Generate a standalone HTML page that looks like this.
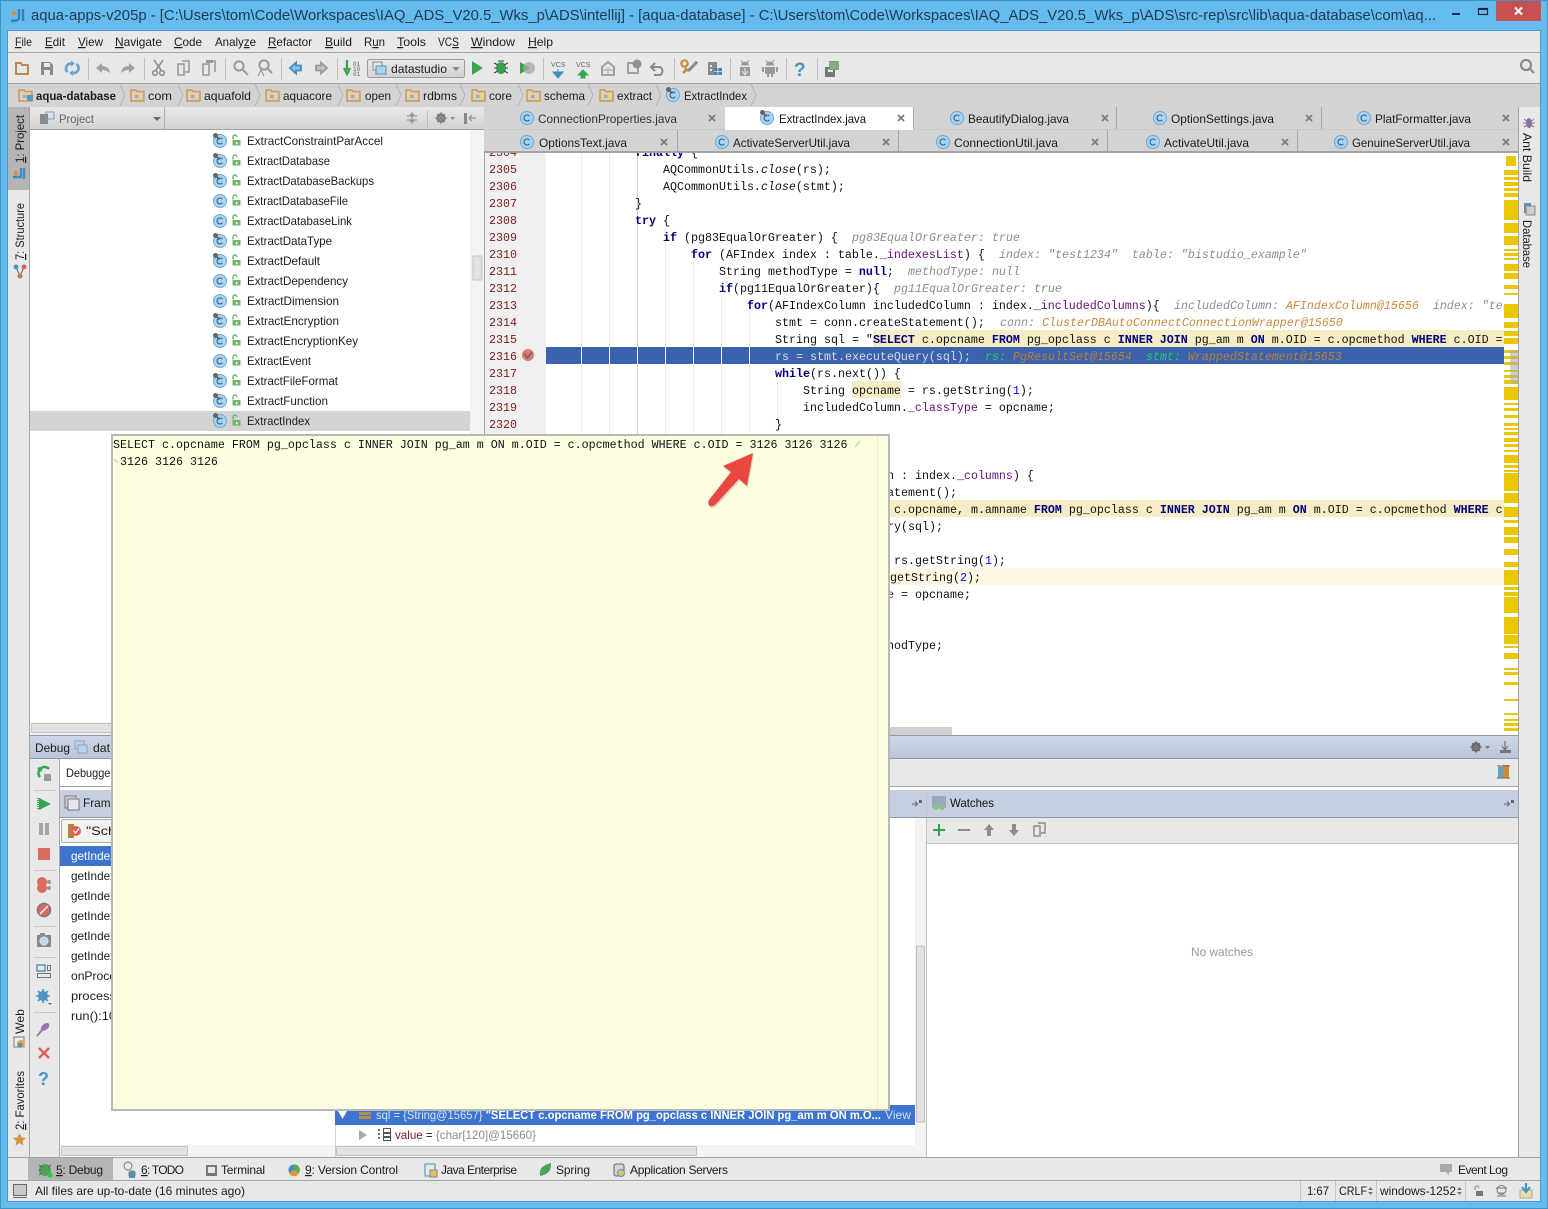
<!DOCTYPE html>
<html><head><meta charset="utf-8"><title>IntelliJ</title>
<style>
html,body{margin:0;padding:0;background:#64bbef;overflow:hidden}
svg{display:block}
text{white-space:pre}
.u{font-family:"Liberation Sans",sans-serif;font-size:12px;fill:#1c1c1c}
.g{fill:#666}
.m{font-family:"Liberation Mono",monospace;font-size:11.667px;fill:#111}
.k{font-weight:bold;fill:#000080}
.f{fill:#660e7a}
.n{fill:#0000ff}
.c{font-style:italic;fill:#8c8c8c}
.o{font-style:italic;fill:#c98a3c}
.l{fill:#7d1a1a}
.w{fill:#d5dde8}
.gr{font-style:italic;fill:#19d45f}
.ob{font-style:italic;fill:#b9803c}
.ul{text-decoration:underline}
</style></head><body>
<svg xmlns="http://www.w3.org/2000/svg" width="1548" height="1209" viewBox="0 0 1548 1209">
<defs>
<linearGradient id="hd" x1="0" y1="0" x2="0" y2="1"><stop offset="0" stop-color="#e9e9e9"/><stop offset="1" stop-color="#d2d2d2"/></linearGradient>
<linearGradient id="bl" x1="0" y1="0" x2="0" y2="1"><stop offset="0" stop-color="#ccd6e6"/><stop offset="1" stop-color="#bcc6d8"/></linearGradient>
<clipPath id="ed"><rect x="484" y="153" width="1020" height="582"/></clipPath>
<clipPath id="ed2"><rect x="546" y="153" width="958" height="582"/></clipPath>
<g id="cc"><circle r="6.5" fill="#a8d4f4" stroke="#6da8d6"/><path d="M2.400-1.800A3 3 0 1 0 2.400 1.800" fill="none" stroke="#3f5f7e" stroke-width="1.100"/></g>
<g id="pin"><circle cx="-4.500" cy="-5.500" r="2.500" fill="#666"/><path d="M-3-4L-.5-1.500" stroke="#555" stroke-width="1.300"/></g>
<g id="lock"><rect x="-3.500" y="-1" width="8" height="5.500" fill="#6fb56f"/><path d="M-3-1.500V-4A2 2 0 0 1 1-4" fill="none" stroke="#6fb56f" stroke-width="1.400"/><rect x="0" y="1" width="1.500" height="2.200" fill="#fff"/></g>
<g id="fo"><path d="M0 0H5L6 1.500H13V11H0Z" fill="#e7cda8" stroke="#c79a5c" stroke-width="1.400"/><rect x="4" y="5" width="3.500" height="3" fill="#7fb4dc"/></g>
<path id="chev" d="M0-11L5 0L0 11" fill="none" stroke="#b5b5b5"/>
<path id="xx" d="M-3-3L3 3M3-3L-3 3" stroke="#7b7b7b" stroke-width="1.800" fill="none"/>
<g id="pinr"><path d="M-5 1H0M-2-1.500L.5 1L-2 3.500" fill="none" stroke="#666"/><rect x="2" y="-3" width="3" height="3" fill="#666"/></g>
</defs>

<!-- window -->
<rect width="1548" height="1209" fill="#64bbef"/>
<rect x=".5" y=".5" width="1547" height="1208" fill="none" stroke="#3f93c8"/>
<rect x="8" y="30" width="1532" height="1171" fill="#e8e8e8"/>
<rect x="7.500" y="30.500" width="1533" height="1171" fill="none" stroke="#4c97c6"/>

<!-- title -->
<g transform="translate(11,9)"><circle cx="3" cy="4" r="2.200" fill="#e08a2e"/><path d="M8 0V9Q8 12 0 12" fill="none" stroke="#3c7fb1" stroke-width="2.400"/><path d="M12 0V12" stroke="#3c7fb1" stroke-width="2.400"/></g>
<text x="31" y="20" font-family="Liberation Sans,sans-serif" font-size="14.500" fill="#1f3a50" textLength="1405" lengthAdjust="spacingAndGlyphs">aqua-apps-v205p - [C:\Users\tom\Code\Workspaces\IAQ_ADS_V20.5_Wks_p\ADS\intellij] - [aqua-database] - C:\Users\tom\Code\Workspaces\IAQ_ADS_V20.5_Wks_p\ADS\src-rep\src\lib\aqua-database\com\aq...</text>
<rect x="1452" y="13" width="8" height="2" fill="#1a2a3a"/>
<rect x="1478.500" y="8.500" width="9" height="6" fill="none" stroke="#1a2a3a" stroke-width="1.200"/><rect x="1478" y="8" width="10" height="2" fill="#1a2a3a"/>
<rect x="1496" y="1" width="45" height="20" fill="#c75050"/>
<path d="M1515 7.500L1522 14.500M1522 7.500L1515 14.500" stroke="#fff" stroke-width="2"/>

<!-- menu -->
<rect x="8" y="52" width="1532" height="1" fill="#a3a3a3"/>
<g class="u">
<text x="15" y="46" textLength="17" lengthAdjust="spacingAndGlyphs"><tspan class="ul">F</tspan>ile</text>
<text x="45" y="46" textLength="20" lengthAdjust="spacingAndGlyphs"><tspan class="ul">E</tspan>dit</text>
<text x="78" y="46" textLength="25" lengthAdjust="spacingAndGlyphs"><tspan class="ul">V</tspan>iew</text>
<text x="115" y="46" textLength="47" lengthAdjust="spacingAndGlyphs"><tspan class="ul">N</tspan>avigate</text>
<text x="174" y="46" textLength="28" lengthAdjust="spacingAndGlyphs"><tspan class="ul">C</tspan>ode</text>
<text x="215" y="46" textLength="41" lengthAdjust="spacingAndGlyphs">Analy<tspan class="ul">z</tspan>e</text>
<text x="268" y="46" textLength="44" lengthAdjust="spacingAndGlyphs"><tspan class="ul">R</tspan>efactor</text>
<text x="325" y="46" textLength="27" lengthAdjust="spacingAndGlyphs"><tspan class="ul">B</tspan>uild</text>
<text x="364" y="46" textLength="21" lengthAdjust="spacingAndGlyphs">R<tspan class="ul">u</tspan>n</text>
<text x="397" y="46" textLength="29" lengthAdjust="spacingAndGlyphs"><tspan class="ul">T</tspan>ools</text>
<text x="438" y="46" textLength="21" lengthAdjust="spacingAndGlyphs">VC<tspan class="ul">S</tspan></text>
<text x="471" y="46" textLength="44" lengthAdjust="spacingAndGlyphs"><tspan class="ul">W</tspan>indow</text>
<text x="528" y="46" textLength="25" lengthAdjust="spacingAndGlyphs"><tspan class="ul">H</tspan>elp</text>
</g>

<!-- toolbar -->
<rect x="8" y="83" width="1532" height="1" fill="#a3a3a3"/>
<g fill="#c0c0c0">
<rect x="88" y="58" width="1" height="22"/><rect x="144" y="58" width="1" height="22"/><rect x="225" y="58" width="1" height="22"/><rect x="281" y="58" width="1" height="22"/><rect x="337" y="58" width="1" height="22"/><rect x="543" y="58" width="1" height="22"/><rect x="674" y="58" width="1" height="22"/><rect x="730" y="58" width="1" height="22"/><rect x="786" y="58" width="1" height="22"/><rect x="817" y="58" width="1" height="22"/>
</g>
<path d="M16 63H21L22 65H28V74H16Z" fill="none" stroke="#b98a4c" stroke-width="2"/>
<path d="M41 62H50L53 65V75H41Z" fill="#8a8a8a"/><rect x="44" y="63" width="6" height="4" fill="#e8e8e8"/><rect x="44" y="70" width="6" height="5" fill="#e8e8e8"/>
<path d="M67.500 72A5 5 0 0 1 71 63.500M76.500 64A5 5 0 0 1 73 73" fill="none" stroke="#6aa6cd" stroke-width="2.800"/><path d="M71 60.500V66.500L75 63.500ZM73 70V76L69 73Z" fill="#6aa6cd"/>
<path d="M96 68L102 63V66Q109 66 110 73Q106 70 102 70V73Z" fill="#a0a0a0"/>
<path d="M135 68L129 63V66Q122 66 121 73Q125 70 129 70V73Z" fill="#a0a0a0"/>
<g fill="none" stroke="#8e8e8e" stroke-width="1.600"><path d="M154 60L161 70M163 60L156 70"/><circle cx="155" cy="73" r="2.300"/><circle cx="162" cy="73" r="2.300"/></g>
<g fill="none" stroke="#9a9a9a" stroke-width="1.600"><path d="M178 64H184V75H178ZM182 61H189V72H185"/></g>
<g fill="none" stroke="#9a9a9a" stroke-width="1.600"><path d="M203 64H209V75H203ZM209 61H215V72"/></g><rect x="206" y="60" width="7" height="3" fill="#9a9a9a"/>
<g fill="none" stroke="#9a9a9a" stroke-width="2"><circle cx="239" cy="66" r="4.600"/><path d="M243 70L248 75"/></g>
<g fill="none" stroke="#9a9a9a" stroke-width="2"><circle cx="264" cy="65" r="4.600"/><path d="M268 69L272 73"/></g><path d="M258 76L261 70L264 76" fill="none" stroke="#8e8e8e"/>
<path d="M290 68L296 62.500V65.500H301V70.500H296V73.500Z" fill="#8fc4e4" stroke="#3f8ec2" stroke-width="1.800"/>
<path d="M327 68L321 62.500V65.500H316V70.500H321V73.500Z" fill="#c4c4c4" stroke="#999" stroke-width="1.800"/>
<path d="M347 60V70M344 68L347 74L350 68" stroke="#34a34a" stroke-width="2.200" fill="none"/>
<text x="353" y="66" font-family="Liberation Mono,monospace" font-size="6" fill="#666">01</text><text x="353" y="71" font-family="Liberation Mono,monospace" font-size="6" fill="#666">10</text><text x="353" y="76" font-family="Liberation Mono,monospace" font-size="6" fill="#666">01</text>
<rect x="367.500" y="59.500" width="97" height="18" rx="2" fill="url(#hd)" stroke="#9a9a9a"/>
<rect x="373" y="62" width="9" height="8" fill="#e6e6e6" stroke="#888"/><rect x="376" y="66" width="10" height="8" fill="#a9d4f0" stroke="#5d92b6"/>
<text class="u" x="391" y="73" textLength="56" lengthAdjust="spacingAndGlyphs">datastudio</text>
<path d="M452 67H460L456 71Z" fill="#888"/>
<path d="M472 61L483 68L472 75Z" fill="#35a64e"/>
<ellipse cx="501" cy="68" rx="5" ry="6" fill="#34a34a"/><path d="M494 63L498 65M494 68H497M494 73L498 71M508 63L504 65M508 68H505M508 73L504 71M498 61L504 61" stroke="#444" fill="none"/>
<path d="M520 62L530 68L520 74Z" fill="#35a64e"/><circle cx="529" cy="68" r="6" fill="#a5a5a5" opacity=".75"/>
<text x="551" y="67" font-family="Liberation Sans" font-size="7" fill="#666">VCS</text><path d="M558 69V75M553 72L558 78L563 72Z" fill="#3f8ec2" stroke="#3f8ec2" stroke-width="1"/>
<text x="576" y="67" font-family="Liberation Sans" font-size="7" fill="#666">VCS</text><path d="M583 70L578 75H581V78H585V75H588Z" fill="#35a64e" stroke="#35a64e"/>
<path d="M602 67L608 62L614 67V75H602Z" fill="none" stroke="#a0a0a0" stroke-width="2"/><path d="M608 67V75M602 70H614" stroke="#a0a0a0"/>
<rect x="627" y="62" width="12" height="12" fill="#a0a0a0"/><rect x="629" y="64" width="8" height="8" fill="#e8e8e8"/><circle cx="637" cy="64" r="4.500" fill="#939393"/>
<path d="M655 63L651 67L655 71M652 67H660A4.500 4.500 0 0 1 660 75H654" fill="none" stroke="#8a8a8a" stroke-width="2"/>
<circle cx="684.500" cy="63.500" r="3.200" fill="none" stroke="#c98a3c" stroke-width="2.200"/><path d="M683 73L686 70M685 68L688 71" stroke="#c98a3c" stroke-width="2.400"/><path d="M688 71L695 64L697 61.500" stroke="#8a8a8a" stroke-width="3" fill="none"/>
<path d="M708 62H717V75H708Z" fill="#8a8a8a"/><rect x="710" y="65" width="2" height="2" fill="#e8e8e8"/><rect x="710" y="69" width="2" height="2" fill="#e8e8e8"/><path d="M714 68H722V75H714Z" fill="#3d86b8"/><path d="M718 68V75M714 71.500H722" stroke="#e8e8e8" stroke-width=".8"/>
<path d="M740 67H750V76H740ZM741 65.500A4 4 0 0 1 749 65.500Z" fill="#9a9a9a"/><path d="M745 68V74M742 71L745 75L748 71" stroke="#e8e8e8" fill="none"/><path d="M741 60L742.500 62.500M749 60L747.500 62.500" stroke="#9a9a9a"/>
<path d="M765 67H775V74H765ZM766 65.500A4 4 0 0 1 774 65.500ZM762 67H764V72H762ZM776 67H778V72H776ZM767 74H769V77H767ZM771 74H773V77H771Z" fill="#9a9a9a"/><path d="M766 60L767.500 62.500M774 60L772.500 62.500" stroke="#9a9a9a"/>
<text x="794" y="76" font-family="Liberation Sans" font-weight="bold" font-size="19" fill="#4b94c4">?</text>
<path d="M825 67H835V77H825Z" fill="#777"/><rect x="828" y="69" width="5" height="3" fill="#e8e8e8"/><rect x="829.500" y="61.500" width="9" height="8" fill="#7fb27f" stroke="#5c965c" stroke-dasharray="2 1"/>
<g fill="none" stroke="#8a8a8a" stroke-width="2.200"><circle cx="1526" cy="65" r="5"/><path d="M1530 69L1534 73"/></g>

<!-- breadcrumb -->
<rect x="8" y="84" width="1532" height="23" fill="#d3d3d3"/>
<g class="u">
<text x="36" y="100" font-weight="bold" textLength="80" lengthAdjust="spacingAndGlyphs">aqua-database</text>
<text x="148" y="100" textLength="24" lengthAdjust="spacingAndGlyphs">com</text>
<text x="204" y="100" textLength="47" lengthAdjust="spacingAndGlyphs">aquafold</text>
<text x="283" y="100" textLength="49" lengthAdjust="spacingAndGlyphs">aquacore</text>
<text x="365" y="100" textLength="26" lengthAdjust="spacingAndGlyphs">open</text>
<text x="423" y="100" textLength="34" lengthAdjust="spacingAndGlyphs">rdbms</text>
<text x="489" y="100" textLength="23" lengthAdjust="spacingAndGlyphs">core</text>
<text x="544" y="100" textLength="41" lengthAdjust="spacingAndGlyphs">schema</text>
<text x="617" y="100" textLength="35" lengthAdjust="spacingAndGlyphs">extract</text>
<text x="684" y="100" textLength="63" lengthAdjust="spacingAndGlyphs">ExtractIndex</text>
</g>
<use href="#fo" x="19" y="90"/><rect x="27" y="95" width="6" height="6" fill="#4f9ac9"/>
<use href="#fo" x="131" y="90"/><use href="#fo" x="187" y="90"/><use href="#fo" x="266" y="90"/><use href="#fo" x="347" y="90"/><use href="#fo" x="406" y="90"/><use href="#fo" x="472" y="90"/><use href="#fo" x="527" y="90"/><use href="#fo" x="600" y="90"/>
<use href="#cc" x="673" y="95"/><use href="#pin" x="673" y="95"/>
<use href="#chev" x="120" y="95"/><use href="#chev" x="178" y="95"/><use href="#chev" x="255" y="95"/><use href="#chev" x="338" y="95"/><use href="#chev" x="396" y="95"/><use href="#chev" x="460" y="95"/><use href="#chev" x="518" y="95"/><use href="#chev" x="588" y="95"/><use href="#chev" x="656" y="95"/><use href="#chev" x="751" y="95"/>

<!-- left strip -->
<rect x="8" y="107" width="21" height="1051" fill="#e8e8e8"/>
<rect x="8" y="107" width="21" height="83" fill="#b5b5b5"/>
<rect x="29" y="107" width="1" height="1051" fill="#a3a3a3"/>
<g class="u">
<text transform="translate(24,163) rotate(-90)" textLength="48" lengthAdjust="spacingAndGlyphs"><tspan class="ul">1</tspan>: Project</text>
<text transform="translate(24,260) rotate(-90)" textLength="57" lengthAdjust="spacingAndGlyphs"><tspan class="ul">7</tspan>: Structure</text>
<text transform="translate(24,1034) rotate(-90)" textLength="25" lengthAdjust="spacingAndGlyphs">Web</text>
<text transform="translate(24,1130) rotate(-90)" textLength="59" lengthAdjust="spacingAndGlyphs"><tspan class="ul">2</tspan>: Favorites</text>
</g>
<g transform="translate(13,168)"><circle cx="3" cy="5" r="2" fill="#e08a2e"/><path d="M0 9H8V0" fill="none" stroke="#3c8ec4" stroke-width="2.400"/><path d="M11 0V11" stroke="#3c8ec4" stroke-width="2.400"/></g>
<path d="M16 267L20 276L24 267" fill="none" stroke="#666"/><circle cx="16" cy="267" r="2.500" fill="#4b94cf"/><circle cx="24" cy="267" r="2.500" fill="#d9605a"/><circle cx="20" cy="276" r="2.500" fill="#b9803c"/>
<rect x="14" y="1037" width="10" height="10" fill="#eee" stroke="#777"/><circle cx="21" cy="1044" r="4" fill="#e8a93c"/><circle cx="20" cy="1045" r="2.500" fill="#4b94cf"/>
<path d="M19.500 1133L21.500 1137.500L26 1138L22.500 1141L23.500 1145.500L19.500 1143L15.500 1145.500L16.500 1141L13 1138L17.500 1137.500Z" fill="#d9923e"/>

<!-- right strip -->
<rect x="1518" y="107" width="22" height="1051" fill="#e8e8e8"/>
<rect x="1518" y="107" width="1" height="1051" fill="#a3a3a3"/>
<g class="u">
<text transform="translate(1523,133) rotate(90)" textLength="49" lengthAdjust="spacingAndGlyphs">Ant Build</text>
<text transform="translate(1523,220) rotate(90)" textLength="48" lengthAdjust="spacingAndGlyphs">Database</text>
</g>
<ellipse cx="1529" cy="123" rx="3" ry="5" fill="#8e6fa8"/><path d="M1524 119L1534 127M1534 119L1524 127M1523 123H1535" stroke="#8e6fa8"/>
<rect x="1524" y="203" width="7" height="10" fill="#5d94bb"/><rect x="1526" y="206" width="9" height="9" fill="#ccc" stroke="#888"/>

<!-- project panel -->
<rect x="30" y="107" width="454" height="22" fill="url(#hd)"/>
<rect x="30" y="107" width="134" height="22" fill="url(#hd)"/>
<rect x="164" y="107" width="1" height="22" fill="#b0b0b0"/>
<rect x="30" y="129" width="454" height="1" fill="#a3a3a3"/>
<rect x="40" y="114" width="8" height="10" fill="#8a8a8a"/><rect x="46" y="112" width="8" height="7" fill="none" stroke="#6ea3c7"/>
<text class="u g" x="59" y="123" textLength="35" lengthAdjust="spacingAndGlyphs">Project</text>
<path d="M153 117H161L157 121Z" fill="#666"/>
<path d="M412 112V124M407 116H417M407 120H417M410 114L412 116L414 114M410 122L412 120L414 122" stroke="#888" fill="none"/>
<rect x="427" y="110" width="1" height="18" fill="#c0c0c0"/>
<circle cx="441" cy="118" r="3.500" fill="none" stroke="#7d7d7d" stroke-width="2.400"/><path d="M441 112V124M435 118H447M437 114L445 122M445 114L437 122" stroke="#7d7d7d"/>
<path d="M450 117H455L452.500 120Z" fill="#888"/>
<rect x="464" y="113" width="3" height="11" fill="#888"/><path d="M469 118H476M472 115L469 118L472 121" stroke="#888" fill="none"/>

<rect x="30" y="130" width="454" height="605" fill="#fff"/>
<rect x="470" y="130" width="14" height="592" fill="#f3f3f3"/>
<rect x="473" y="256" width="9" height="24" rx="1" fill="#e2e2e2" stroke="#c0c0c0"/>
<rect x="30" y="411" width="440" height="20" fill="#d4d4d4"/>
<rect x="30" y="722" width="454" height="13" fill="#f3f3f3"/>
<rect x="31.500" y="723.500" width="100" height="9" rx="1" fill="#e2e2e2" stroke="#c0c0c0"/>

<g class="u">
<text x="247" y="145" textLength="136" lengthAdjust="spacingAndGlyphs">ExtractConstraintParAccel</text>
<text x="247" y="165" textLength="83" lengthAdjust="spacingAndGlyphs">ExtractDatabase</text>
<text x="247" y="185" textLength="127" lengthAdjust="spacingAndGlyphs">ExtractDatabaseBackups</text>
<text x="247" y="205" textLength="101" lengthAdjust="spacingAndGlyphs">ExtractDatabaseFile</text>
<text x="247" y="225" textLength="105" lengthAdjust="spacingAndGlyphs">ExtractDatabaseLink</text>
<text x="247" y="245" textLength="85" lengthAdjust="spacingAndGlyphs">ExtractDataType</text>
<text x="247" y="265" textLength="73" lengthAdjust="spacingAndGlyphs">ExtractDefault</text>
<text x="247" y="285" textLength="101" lengthAdjust="spacingAndGlyphs">ExtractDependency</text>
<text x="247" y="305" textLength="92" lengthAdjust="spacingAndGlyphs">ExtractDimension</text>
<text x="247" y="325" textLength="92" lengthAdjust="spacingAndGlyphs">ExtractEncryption</text>
<text x="247" y="345" textLength="111" lengthAdjust="spacingAndGlyphs">ExtractEncryptionKey</text>
<text x="247" y="365" textLength="64" lengthAdjust="spacingAndGlyphs">ExtractEvent</text>
<text x="247" y="385" textLength="91" lengthAdjust="spacingAndGlyphs">ExtractFileFormat</text>
<text x="247" y="405" textLength="81" lengthAdjust="spacingAndGlyphs">ExtractFunction</text>
<text x="247" y="425" textLength="63" lengthAdjust="spacingAndGlyphs">ExtractIndex</text>
</g>
<g>
<use href="#cc" x="220" y="141"/><use href="#pin" x="220" y="141"/><use href="#lock" x="236" y="141"/>
<use href="#cc" x="220" y="161"/><use href="#pin" x="220" y="161"/><use href="#lock" x="236" y="161"/>
<use href="#cc" x="220" y="181"/><use href="#pin" x="220" y="181"/><use href="#lock" x="236" y="181"/>
<use href="#cc" x="220" y="201"/><use href="#lock" x="236" y="201"/>
<use href="#cc" x="220" y="221"/><use href="#lock" x="236" y="221"/>
<use href="#cc" x="220" y="241"/><use href="#pin" x="220" y="241"/><use href="#lock" x="236" y="241"/>
<use href="#cc" x="220" y="261"/><use href="#pin" x="220" y="261"/><use href="#lock" x="236" y="261"/>
<use href="#cc" x="220" y="281"/><use href="#lock" x="236" y="281"/>
<use href="#cc" x="220" y="301"/><use href="#lock" x="236" y="301"/>
<use href="#cc" x="220" y="321"/><use href="#pin" x="220" y="321"/><use href="#lock" x="236" y="321"/>
<use href="#cc" x="220" y="341"/><use href="#pin" x="220" y="341"/><use href="#lock" x="236" y="341"/>
<use href="#cc" x="220" y="361"/><use href="#lock" x="236" y="361"/>
<use href="#cc" x="220" y="381"/><use href="#pin" x="220" y="381"/><use href="#lock" x="236" y="381"/>
<use href="#cc" x="220" y="401"/><use href="#pin" x="220" y="401"/><use href="#lock" x="236" y="401"/>
<use href="#cc" x="220" y="421"/><use href="#pin" x="220" y="421"/><use href="#lock" x="236" y="421"/>
</g>

<!-- editor -->
<rect x="484" y="153" width="1034" height="582" fill="#fff"/>
<rect x="484" y="130" width="62" height="605" fill="#f0f0f0"/>
<rect x="484" y="130" width="1" height="605" fill="#a3a3a3"/>
<rect x="890" y="500" width="614" height="17" fill="#f6edc4"/>
<rect x="890" y="568" width="614" height="17" fill="#fdf8e4"/>
<rect x="873" y="330" width="631" height="17" fill="#f6edc4"/>
<rect x="546" y="347" width="958" height="17" fill="#3a62ad"/>
<rect x="852" y="381" width="49" height="17" fill="#f6edc4"/>
<g fill="#ececec">
<rect x="581" y="153" width="1" height="281"/><rect x="609" y="153" width="1" height="281"/>
<rect x="637" y="153" width="1" height="281" fill="#d0d0d0"/>
<rect x="665" y="228" width="1" height="206"/><rect x="693" y="262" width="1" height="172"/><rect x="721" y="296" width="1" height="138"/><rect x="749" y="313" width="1" height="121"/><rect x="777" y="381" width="1" height="40"/>
</g>
<g fill="#fff"><rect x="581" y="347" width="1" height="17"/><rect x="609" y="347" width="1" height="17"/><rect x="637" y="347" width="1" height="17"/><rect x="665" y="347" width="1" height="17"/><rect x="693" y="347" width="1" height="17"/><rect x="721" y="347" width="1" height="17"/><rect x="749" y="347" width="1" height="17"/></g>
<g class="m" clip-path="url(#ed)">
<g class="l">
<text x="489" y="156" class="m l">2304</text><text x="489" y="173" class="m l">2305</text><text x="489" y="190" class="m l">2306</text><text x="489" y="207" class="m l">2307</text><text x="489" y="224" class="m l">2308</text><text x="489" y="241" class="m l">2309</text><text x="489" y="258" class="m l">2310</text><text x="489" y="275" class="m l">2311</text><text x="489" y="292" class="m l">2312</text><text x="489" y="309" class="m l">2313</text><text x="489" y="326" class="m l">2314</text><text x="489" y="343" class="m l">2315</text><text x="489" y="360" class="m l">2316</text><text x="489" y="377" class="m l">2317</text><text x="489" y="394" class="m l">2318</text><text x="489" y="411" class="m l">2319</text><text x="489" y="428" class="m l">2320</text>
</g>
</g>
<circle cx="528" cy="355" r="6" fill="#e5776b"/><path d="M524.500 354L527.500 358L532 352" fill="none" stroke="#666" stroke-width="1.600"/>
<g clip-path="url(#ed2)">
<text class="m" x="635" y="156"><tspan class="k">finally</tspan> {</text>
<text class="m" x="663" y="173">AQCommonUtils.<tspan font-style="italic">close</tspan>(rs);</text>
<text class="m" x="663" y="190">AQCommonUtils.<tspan font-style="italic">close</tspan>(stmt);</text>
<text class="m" x="635" y="207">}</text>
<text class="m" x="635" y="224"><tspan class="k">try</tspan> {</text>
<text class="m" x="663" y="241"><tspan class="k">if</tspan> (pg83EqualOrGreater) {</text><text class="m c" x="852" y="241">pg83EqualOrGreater: true</text>
<text class="m" x="691" y="258"><tspan class="k">for</tspan> (AFIndex index : table.<tspan class="f">_indexesList</tspan>) {</text><text class="m c" x="999" y="258">index: "test1234"  table: "bistudio_example"</text>
<text class="m" x="719" y="275">String methodType = <tspan class="k">null</tspan>;</text><text class="m c" x="908" y="275">methodType: null</text>
<text class="m" x="719" y="292"><tspan class="k">if</tspan>(pg11EqualOrGreater){</text><text class="m c" x="894" y="292">pg11EqualOrGreater: true</text>
<text class="m" x="747" y="309"><tspan class="k">for</tspan>(AFIndexColumn includedColumn : index.<tspan class="f">_includedColumns</tspan>){</text><text class="m c" x="1174" y="309">includedColumn: <tspan class="o">AFIndexColumn@15656</tspan>  index: "test</text>
<text class="m" x="775" y="326">stmt = conn.createStatement();</text><text class="m c" x="1000" y="326">conn: <tspan class="o">ClusterDBAutoConnectConnectionWrapper@15650</tspan></text>
<text class="m" x="775" y="343">String sql = "<tspan class="k">SELECT</tspan> c.opcname <tspan class="k">FROM</tspan> pg_opclass c <tspan class="k">INNER JOIN</tspan> pg_am m <tspan class="k">ON</tspan> m.OID = c.opcmethod <tspan class="k">WHERE</tspan> c.OID =</text>
<text class="m w" x="775" y="360">rs = stmt.executeQuery(sql);</text><text class="m gr" x="985" y="360">rs: <tspan class="ob">PgResultSet@15654</tspan>  stmt: <tspan class="ob">WrappedStatement@15653</tspan></text>
<text class="m" x="775" y="377"><tspan class="k">while</tspan>(rs.next()) {</text>
<text class="m" x="803" y="394">String opcname = rs.getString(<tspan class="n">1</tspan>);</text>
<text class="m" x="803" y="411">includedColumn.<tspan class="f">_classType</tspan> = opcname;</text>
<text class="m" x="775" y="428">}</text>
<text class="m" x="887" y="479">n : index.<tspan class="f">_columns</tspan>) {</text>
<text class="m" x="887" y="496">atement();</text>
<text class="m" x="894" y="513">c.opcname, m.amname <tspan class="k">FROM</tspan> pg_opclass c <tspan class="k">INNER JOIN</tspan> pg_am m <tspan class="k">ON</tspan> m.OID = c.opcmethod <tspan class="k">WHERE</tspan> c</text>
<text class="m" x="887" y="530">ry(sql);</text>
<text class="m" x="894" y="564">rs.getString(<tspan class="n">1</tspan>);</text>
<text class="m" x="883" y="581">.getString(<tspan class="n">2</tspan>);</text>
<text class="m f" x="887" y="598">e<tspan fill="#111"> = opcname;</tspan></text>
<text class="m" x="887" y="649">hodType;</text>
</g>
<!-- error stripes -->
<g fill="#ebc700">
<rect x="1506" y="156" width="10" height="10"/>
<rect x="1504" y="170" width="14" height="5"/><rect x="1504" y="177" width="14" height="3"/><rect x="1504" y="182" width="14" height="4"/><rect x="1504" y="188" width="14" height="3"/><rect x="1504" y="193" width="14" height="4"/>
<rect x="1504" y="200" width="14" height="20"/><rect x="1504" y="223" width="14" height="10"/><rect x="1504" y="236" width="14" height="9"/><rect x="1504" y="249" width="14" height="2"/><rect x="1504" y="253" width="14" height="3"/><rect x="1504" y="258" width="14" height="2"/><rect x="1504" y="264" width="14" height="7"/><rect x="1504" y="273" width="14" height="6"/><rect x="1504" y="285" width="14" height="4"/><rect x="1504" y="293" width="14" height="2"/>
<rect x="1504" y="304" width="14" height="14"/><rect x="1504" y="322" width="14" height="6"/><rect x="1504" y="331" width="14" height="5"/><rect x="1504" y="338" width="14" height="6"/><rect x="1504" y="350" width="14" height="3"/><rect x="1504" y="356" width="14" height="3"/><rect x="1504" y="362" width="14" height="3"/><rect x="1504" y="370" width="14" height="2"/><rect x="1504" y="375" width="14" height="3"/><rect x="1504" y="380" width="14" height="4"/><rect x="1504" y="387" width="14" height="13"/><rect x="1504" y="403" width="14" height="2"/><rect x="1504" y="408" width="14" height="3"/><rect x="1504" y="415" width="14" height="3"/><rect x="1504" y="423" width="14" height="3"/><rect x="1504" y="428" width="14" height="2"/><rect x="1504" y="432" width="14" height="3"/>
<rect x="1504" y="438" width="14" height="4"/><rect x="1504" y="444" width="14" height="3"/><rect x="1504" y="450" width="14" height="2"/><rect x="1504" y="455" width="14" height="8"/>
<rect x="1504" y="461" width="14" height="1"/><rect x="1504" y="465" width="14" height="3"/><rect x="1504" y="470" width="14" height="2"/>
<rect x="1504" y="473" width="14" height="18"/><rect x="1504" y="493" width="14" height="10"/><rect x="1504" y="507" width="14" height="10"/><rect x="1504" y="520" width="14" height="3"/><rect x="1504" y="527" width="14" height="8"/><rect x="1504" y="537" width="14" height="6"/><rect x="1504" y="549" width="14" height="6"/><rect x="1504" y="562" width="14" height="5"/><rect x="1504" y="570" width="14" height="15"/><rect x="1504" y="587" width="14" height="3"/><rect x="1504" y="592" width="14" height="4"/><rect x="1504" y="597" width="14" height="16"/><rect x="1504" y="617" width="14" height="17"/><rect x="1504" y="635" width="14" height="9"/><rect x="1504" y="646" width="14" height="2"/><rect x="1504" y="653" width="14" height="6"/><rect x="1504" y="668" width="14" height="2"/><rect x="1504" y="672" width="14" height="3"/><rect x="1504" y="682" width="14" height="3"/><rect x="1504" y="699" width="14" height="2"/><rect x="1504" y="713" width="14" height="2"/><rect x="1504" y="719" width="14" height="2"/><rect x="1504" y="723" width="14" height="3"/><rect x="1504" y="728" width="14" height="3"/>
</g>
<rect x="1510" y="350" width="8" height="34" fill="#a9a9a9" opacity=".55"/>
<rect x="890" y="727" width="62" height="8" fill="#d0d0d0"/>

<!-- tabs -->
<rect x="484" y="107" width="1034" height="46" fill="#d3d3d3"/>
<rect x="484" y="151" width="1034" height="2" fill="#a3a3a3"/>
<rect x="725" y="107" width="188" height="23" fill="#fff"/>
<g fill="#a8a8a8">
<rect x="913" y="107" width="1" height="23"/><rect x="1116" y="107" width="1" height="23"/><rect x="1321" y="107" width="1" height="23"/>
<rect x="677" y="130" width="1" height="21"/><rect x="898" y="130" width="1" height="21"/><rect x="1107" y="130" width="1" height="21"/><rect x="1297" y="130" width="1" height="21"/>
</g>
<rect x="484" y="129" width="241" height="1" fill="#c8c8c8"/><rect x="913" y="129" width="605" height="1" fill="#c8c8c8"/>
<g class="u">
<text x="538" y="123" fill="#333" textLength="139" lengthAdjust="spacingAndGlyphs">ConnectionProperties.java</text>
<text x="779" y="123" style="fill:#111" textLength="87" lengthAdjust="spacingAndGlyphs">ExtractIndex.java</text>
<text x="968" y="123" textLength="101" lengthAdjust="spacingAndGlyphs">BeautifyDialog.java</text>
<text x="1171" y="123" textLength="103" lengthAdjust="spacingAndGlyphs">OptionSettings.java</text>
<text x="1375" y="123" textLength="96" lengthAdjust="spacingAndGlyphs">PlatFormatter.java</text>
<text x="539" y="147" textLength="88" lengthAdjust="spacingAndGlyphs">OptionsText.java</text>
<text x="733" y="147" textLength="117" lengthAdjust="spacingAndGlyphs">ActivateServerUtil.java</text>
<text x="954" y="147" textLength="104" lengthAdjust="spacingAndGlyphs">ConnectionUtil.java</text>
<text x="1164" y="147" textLength="85" lengthAdjust="spacingAndGlyphs">ActivateUtil.java</text>
<text x="1352" y="147" textLength="118" lengthAdjust="spacingAndGlyphs">GenuineServerUtil.java</text>
</g>
<use href="#cc" x="527" y="118"/><use href="#cc" x="767" y="118"/><use href="#pin" x="767" y="118"/><use href="#cc" x="957" y="118"/><use href="#cc" x="1160" y="118"/><use href="#cc" x="1364" y="118"/>
<use href="#cc" x="527" y="142"/><use href="#cc" x="722" y="142"/><use href="#cc" x="943" y="142"/><use href="#cc" x="1153" y="142"/><use href="#cc" x="1341" y="142"/>
<use href="#xx" x="712" y="118"/><use href="#xx" x="901" y="118"/><use href="#xx" x="1105" y="118"/><use href="#xx" x="1309" y="118"/><use href="#xx" x="1506" y="118"/>
<use href="#xx" x="664" y="142"/><use href="#xx" x="886" y="142"/><use href="#xx" x="1095" y="142"/><use href="#xx" x="1285" y="142"/><use href="#xx" x="1506" y="142"/>

<!-- debug panel -->
<rect x="30" y="735" width="1488" height="1" fill="#8f9aae"/>
<rect x="30" y="736" width="1488" height="22" fill="url(#bl)"/>
<rect x="30" y="758" width="1488" height="1" fill="#8f9aae"/>
<text class="u" x="35" y="752" textLength="35" lengthAdjust="spacingAndGlyphs">Debug</text>
<rect x="75" y="741" width="9" height="8" fill="none" stroke="#98a4b6"/><rect x="78" y="745" width="9" height="8" fill="#b7d5ea" stroke="#8aa5ba"/>
<text class="u" x="93" y="752" textLength="17" lengthAdjust="spacingAndGlyphs">dat</text>
<circle cx="1476" cy="747" r="3.500" fill="none" stroke="#6b6b6b" stroke-width="2.400"/><path d="M1476 741V753M1470 747H1482M1472 743L1480 751M1480 743L1472 751" stroke="#6b6b6b"/>
<path d="M1485 746H1490L1487.500 749Z" fill="#777"/>
<path d="M1505 741V749M1502 746L1505 750L1508 746" stroke="#666" fill="none"/><rect x="1500" y="750" width="11" height="3" fill="#777"/>

<rect x="30" y="759" width="1488" height="27" fill="#e8e8e8"/>
<rect x="60" y="759" width="60" height="28" fill="#fff"/>
<rect x="30" y="786" width="1488" height="1" fill="#a8a8a8"/>
<rect x="30" y="787" width="1488" height="371" fill="#fff"/>
<text class="u" x="66" y="777" textLength="48" lengthAdjust="spacingAndGlyphs">Debugger</text>
<rect x="1498" y="767" width="5" height="11" fill="#5da3c9"/><rect x="1503" y="765" width="6" height="13" fill="#d48b2e"/><path d="M1497 766H1510M1497 778H1510" stroke="#666"/>

<rect x="30" y="759" width="30" height="399" fill="#e8e8e8"/>
<rect x="59" y="759" width="1" height="399" fill="#a8a8a8"/>
<rect x="60" y="790" width="866" height="27" fill="#c5cfe0"/>
<rect x="60" y="817" width="866" height="1" fill="#8f9aae"/>
<rect x="926" y="790" width="592" height="27" fill="#c5cfe0"/>
<rect x="926" y="790" width="1" height="368" fill="#c4c4c4"/>
<rect x="926" y="817" width="592" height="1" fill="#8f9aae"/>
<rect x="927" y="818" width="591" height="25" fill="#e8e8e8"/>
<rect x="927" y="843" width="591" height="1" fill="#c4c4c4"/>
<rect x="65" y="796" width="11" height="12" fill="none" stroke="#777"/><rect x="68" y="799" width="11" height="11" fill="#e4e8ee" stroke="#777"/>
<text class="u" x="83" y="807" textLength="40" lengthAdjust="spacingAndGlyphs">Frames</text>
<use href="#pinr" x="917" y="803"/><use href="#pinr" x="1509" y="803"/>
<rect x="932" y="796" width="14" height="12" fill="#9aa8bc"/><circle cx="936" cy="807" r="3" fill="#8ec08e"/><circle cx="942" cy="807" r="3" fill="#8ec08e"/>
<text class="u" x="950" y="807" style="fill:#111" textLength="44" lengthAdjust="spacingAndGlyphs">Watches</text>
<path d="M933 830H945M939 824V836" stroke="#2ea44f" stroke-width="2"/><path d="M958 830H970" stroke="#8e8e8e" stroke-width="2"/>
<path d="M989 824L994 830H991V836H987V830H984Z" fill="#8e8e8e"/><path d="M1014 836L1019 830H1016V824H1012V830H1009Z" fill="#8e8e8e"/>
<path d="M1034 826H1040V836H1034ZM1038 823H1045V833H1041" fill="none" stroke="#8e8e8e" stroke-width="1.500"/>
<text class="u" x="1191" y="956" style="fill:#999" textLength="62" lengthAdjust="spacingAndGlyphs">No watches</text>
<rect x="915" y="818" width="11" height="340" fill="#f3f3f3"/>
<rect x="916.500" y="946" width="8" height="176" rx="1" fill="#e2e2e2" stroke="#bdbdbd"/>

<rect x="61.500" y="819.500" width="60" height="23" rx="2" fill="#f2f2f2" stroke="#ababab"/>
<rect x="68" y="824" width="6" height="14" fill="#b9803c"/><circle cx="76" cy="831" r="5" fill="#e0605a"/><path d="M73.500 830.500L75.500 833L79 828.500" stroke="#fff" fill="none" stroke-width="1.300"/>
<text class="u" x="86" y="835" textLength="30" lengthAdjust="spacingAndGlyphs">"Sch</text>
<rect x="60" y="846" width="60" height="20" fill="#3c74cf"/>
<g class="u">
<text x="71" y="860" style="fill:#fff" textLength="45" lengthAdjust="spacingAndGlyphs">getIndex</text>
<text x="71" y="880" textLength="45" lengthAdjust="spacingAndGlyphs">getIndex</text>
<text x="71" y="900" textLength="45" lengthAdjust="spacingAndGlyphs">getIndex</text>
<text x="71" y="920" textLength="45" lengthAdjust="spacingAndGlyphs">getIndex</text>
<text x="71" y="940" textLength="45" lengthAdjust="spacingAndGlyphs">getIndex</text>
<text x="71" y="960" textLength="45" lengthAdjust="spacingAndGlyphs">getIndex</text>
<text x="71" y="980" textLength="45" lengthAdjust="spacingAndGlyphs">onProce</text>
<text x="71" y="1000" textLength="45" lengthAdjust="spacingAndGlyphs">process</text>
<text x="71" y="1020" textLength="45" lengthAdjust="spacingAndGlyphs">run():10</text>
</g>
<!-- debug sidebar icons -->
<g fill="#c8c8c8"><rect x="34" y="790" width="22" height="1"/><rect x="34" y="870" width="22" height="1"/><rect x="34" y="926" width="22" height="1"/><rect x="34" y="957" width="22" height="1"/><rect x="34" y="1012" width="22" height="1"/></g>
<path d="M49 769A6 6 0 1 0 40 777" fill="none" stroke="#2fa84f" stroke-width="2.400"/><path d="M37 768L44 766L41 772Z" fill="#2fa84f"/><rect x="44" y="774" width="7" height="7" fill="#999"/>
<path d="M39 798L51 804L39 810Z" fill="#2fa84f"/><path d="M38 798V810" stroke="#2fa84f" stroke-dasharray="1 1" stroke-width="2"/>
<rect x="39" y="823" width="4" height="12" fill="#a5a5a5"/><rect x="45" y="823" width="4" height="12" fill="#a5a5a5"/>
<rect x="38" y="848" width="12" height="12" fill="#dc6a5e"/>
<circle cx="42" cy="882" r="5" fill="#dc6a5e"/><circle cx="42" cy="888" r="5" fill="#dc6a5e"/><circle cx="49" cy="882" r="2" fill="#999"/><circle cx="49" cy="888" r="2" fill="#999"/>
<circle cx="44" cy="910" r="6.500" fill="#dc6a5e" stroke="#777" stroke-width="1.500"/><path d="M40 914L48 906" stroke="#e8e8e8" stroke-width="1.600"/>
<rect x="37" y="935" width="14" height="12" fill="#8a8a8a"/><circle cx="44" cy="941" r="4" fill="#bcd9ec" stroke="#e8e8e8"/><rect x="40" y="933" width="5" height="2" fill="#8a8a8a"/>
<rect x="37" y="965" width="8" height="6" fill="none" stroke="#5d94bb" stroke-width="1.500"/><rect x="47.500" y="965.500" width="3" height="5" fill="none" stroke="#777"/><rect x="37.500" y="973.500" width="13" height="4" fill="none" stroke="#777"/>
<circle cx="43" cy="996" r="3.500" fill="none" stroke="#4b94c4" stroke-width="3"/><path d="M43 989V1003M36 996H50M38 991L48 1001M48 991L38 1001" stroke="#4b94c4" stroke-width="1.600"/><path d="M48 1003H52L50 1005Z" fill="#666"/>
<ellipse cx="45" cy="1027" rx="5" ry="3" transform="rotate(-40 45 1027)" fill="#9a74b0"/><path d="M37 1036L42 1030" stroke="#8a8a8a" stroke-width="2"/>
<path d="M39 1048L49 1058M49 1048L39 1058" stroke="#e0605a" stroke-width="2.500"/>
<text x="38" y="1085" font-family="Liberation Sans" font-weight="bold" font-size="18" fill="#4b94c4">?</text>

<!-- variables -->
<rect x="335" y="818" width="1" height="340" fill="#d0d0d0"/>
<rect x="335" y="1105" width="580" height="20" fill="#3c74cf"/>
<path d="M338 1111H347L342.500 1119Z" fill="#fff"/>
<rect x="359" y="1112" width="12" height="3" fill="#b58b50"/><rect x="359" y="1116" width="12" height="3" fill="#b58b50"/>
<text class="u" x="376" y="1119" style="fill:#d7e3f6" textLength="505" lengthAdjust="spacingAndGlyphs">sql = {String@15657} <tspan font-weight="bold" style="fill:#fff">"SELECT c.opcname FROM pg_opclass c INNER JOIN pg_am m ON m.O...</tspan></text>
<text class="u" x="885" y="1119" style="fill:#cfe0f8" textLength="26" lengthAdjust="spacingAndGlyphs">View</text>
<path d="M359 1130L367 1135L359 1140Z" fill="#a8a8a8"/>
<path d="M379 1129V1141" stroke="#3c74cf" stroke-dasharray="2 2" stroke-width="2"/><rect x="383.500" y="1128.500" width="7" height="4" fill="none" stroke="#555"/><rect x="383.500" y="1133.500" width="7" height="3" fill="none" stroke="#555"/><rect x="383.500" y="1137.500" width="7" height="3" fill="none" stroke="#555"/>
<text class="u" x="395" y="1139" textLength="141" lengthAdjust="spacingAndGlyphs"><tspan style="fill:#7d1a1a">value</tspan> = <tspan style="fill:#8a8a8a">{char[120]@15660}</tspan></text>
<rect x="60" y="1145" width="866" height="13" fill="#f3f3f3"/>
<rect x="61.500" y="1146.500" width="126" height="9" rx="1" fill="#e2e2e2" stroke="#c0c0c0"/>
<rect x="336.500" y="1146.500" width="360" height="9" rx="1" fill="#e2e2e2" stroke="#c0c0c0"/>
<rect x="335" y="1145" width="1" height="13" fill="#d0d0d0"/>

<!-- bottom tool bar -->
<rect x="8" y="1157" width="1532" height="1" fill="#a3a3a3"/>
<rect x="8" y="1158" width="1532" height="22" fill="#e8e8e8"/>
<rect x="28" y="1158" width="85" height="22" fill="#b5b5b5"/>
<rect x="8" y="1180" width="1532" height="1" fill="#a3a3a3"/>
<g class="u">
<text x="56" y="1174" textLength="47" lengthAdjust="spacing"><tspan class="ul">5</tspan>: Debug</text>
<text x="141" y="1174" textLength="43" lengthAdjust="spacing"><tspan class="ul">6</tspan>: TODO</text>
<text x="221" y="1174" textLength="44" lengthAdjust="spacing">Terminal</text>
<text x="305" y="1174" textLength="93" lengthAdjust="spacing"><tspan class="ul">9</tspan>: Version Control</text>
<text x="441" y="1174" textLength="76" lengthAdjust="spacing">Java Enterprise</text>
<text x="556" y="1174" textLength="34" lengthAdjust="spacing">Spring</text>
<text x="630" y="1174" textLength="98" lengthAdjust="spacing">Application Servers</text>
<text x="1458" y="1174" textLength="50" lengthAdjust="spacing">Event Log</text>
</g>
<ellipse cx="45" cy="1170" rx="6" ry="6" fill="#4ea35a"/><circle cx="50" cy="1175" r="2.500" fill="#1fd044"/><path d="M39 1165L42 1167M39 1170H41M39 1175L42 1173M51 1165L48 1167" stroke="#555"/>
<circle cx="128" cy="1166" r="4" fill="#e8e8e8" stroke="#777"/><circle cx="132" cy="1174" r="4" fill="#e39a4c"/><rect x="129" y="1171" width="6" height="7" fill="#4b94c4"/>
<rect x="206" y="1165" width="11" height="11" fill="#777"/><rect x="208" y="1167" width="7" height="6" fill="#e8e8e8"/>
<circle cx="294" cy="1170" r="5.500" fill="#3f8ec2"/><path d="M294 1170V1164.500A5.500 5.500 0 0 1 299 1173Z" fill="#52b04f"/><path d="M294 1170L299 1173A5.500 5.500 0 0 1 289 1173Z" fill="#e09a3c"/>
<rect x="425" y="1164" width="10" height="12" fill="#e8e8e8" stroke="#3f8ec2"/><rect x="430" y="1170" width="7" height="7" fill="#e3c16a" stroke="#888"/>
<path d="M540 1176Q538 1166 551 1163Q552 1174 540 1176Z" fill="#4ea35a"/>
<rect x="614" y="1164" width="10" height="12" rx="2" fill="#d5d5d5" stroke="#666"/><circle cx="621" cy="1173" r="3.500" fill="#e3c16a" stroke="#4b94c4"/>

<!-- status -->
<rect x="13.500" y="1184.500" width="13" height="11" fill="#c9c9c9" stroke="#666"/><rect x="13" y="1197" width="14" height="1" fill="#666"/>
<text class="u" x="35" y="1195" textLength="210" lengthAdjust="spacingAndGlyphs">All files are up-to-date (16 minutes ago)</text>
<g fill="#c6c6c6"><rect x="1300" y="1181" width="1" height="20"/><rect x="1335" y="1181" width="1" height="20"/><rect x="1376" y="1181" width="1" height="20"/><rect x="1465" y="1181" width="1" height="20"/></g>
<g class="u">
<text x="1307" y="1195" textLength="22" lengthAdjust="spacingAndGlyphs">1:67</text>
<text x="1339" y="1195" textLength="28" lengthAdjust="spacingAndGlyphs">CRLF</text>
<text x="1380" y="1195" textLength="76" lengthAdjust="spacingAndGlyphs">windows-1252</text>
</g>
<path d="M1368 1190L1370.500 1187L1373 1190ZM1368 1192L1370.500 1195L1373 1192ZM1457 1190L1459.500 1187L1462 1190ZM1457 1192L1459.500 1195L1462 1192Z" fill="#777"/>
<rect x="1476" y="1191" width="7" height="5" fill="#777"/><path d="M1475 1190V1188A2 2 0 0 1 1479 1188" fill="none" stroke="#888"/>
<circle cx="1501.500" cy="1190" r="4.500" fill="none" stroke="#777"/><path d="M1496 1188H1507M1497 1196H1506M1499 1193H1504" stroke="#777"/>
<rect x="1520" y="1190" width="12" height="8" fill="#eedba0" stroke="#aaa"/><path d="M1526 1183V1191M1522 1187L1526 1192L1530 1187" fill="none" stroke="#3f9ad0" stroke-width="2.200"/>
<path d="M1440 1164H1452V1172H1449V1175L1446 1172H1440Z" fill="#a9a9a9"/>

<!-- popup -->
<rect x="112" y="435" width="777" height="675" fill="#fdfde0" stroke="#b8b8b8" stroke-width="2"/>
<rect x="877" y="436" width="1" height="673" fill="#eeeecd"/>
<text class="m" x="113" y="448" style="fill:#111">SELECT c.opcname FROM pg_opclass c INNER JOIN pg_am m ON m.OID = c.opcmethod WHERE c.OID = 3126 3126 3126</text>
<text class="m" x="120" y="465" style="fill:#111">3126 3126 3126</text>
<path d="M855 447L860 441" stroke="#d5d5b8" stroke-width="1.500"/><path d="M114 459L118 463" stroke="#d5d5b8" stroke-width="1.500"/>
<!-- annotation arrow -->
<path d="M753 453L723 466L731 472L709 500Q707 504 710 506Q713 507 716 504L739 479L747 486Z" fill="#bdb9a2" opacity=".5" transform="translate(1,2)"/>
<path d="M753 453L723 466L731 472L709 500Q707 504 710 506Q713 507 716 504L739 479L747 486Z" fill="#e8483f"/>
</svg>
</body></html>
